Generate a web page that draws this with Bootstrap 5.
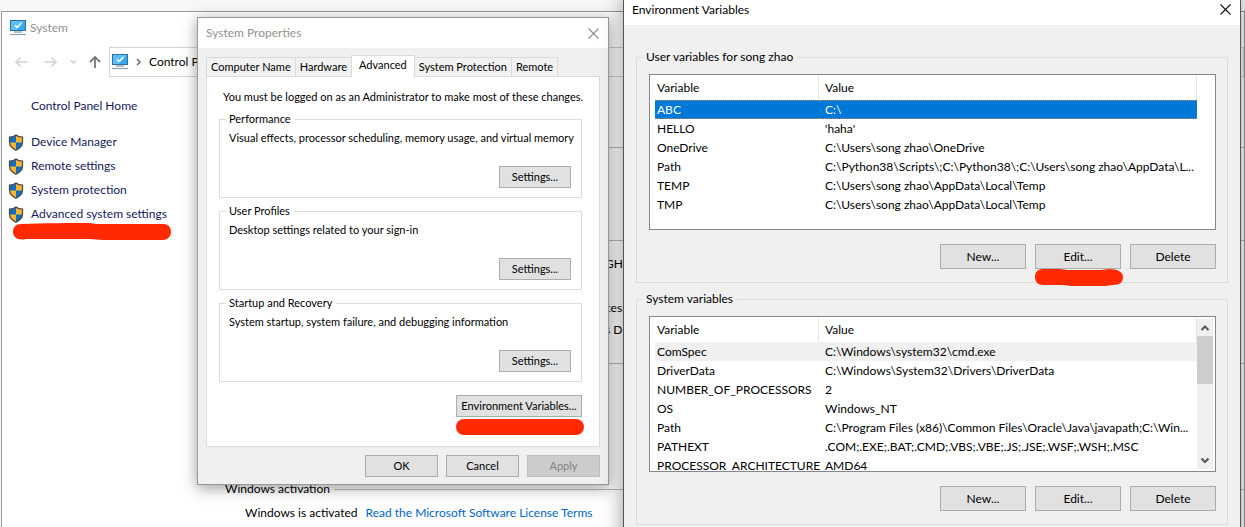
<!DOCTYPE html>
<html lang="en">
<head>
<meta charset="utf-8">
<meta name="viewport" content="width=device-width, initial-scale=1">
<title>System</title>
<link href="https://cdn.jsdelivr.net/npm/bootstrap@5.3.0/dist/css/bootstrap.min.css" rel="stylesheet">
<style>
  body { font-family: Lato, "Open Sans", sans-serif; font-size: 12px; line-height: 16px; color: #000; background: #f7f7f7; }
  .desktop { height: 100vh; min-height: 500px; }
  .window { border: 1px solid #999; }
  .win-system { inset: 11px 0 -20px 1px; background: #fff; }
  .win-props { left: 197px; top: 17px; width: 412px; background: #f0f0f0; box-shadow: 0 3px 14px rgba(0,0,0,.4); font-size: 11px; }
  .win-env { left: 623px; right: 4px; top: -6px; bottom: -20px; min-width: 560px; background: #f0f0f0; border-color: #555; box-shadow: 0 4px 20px rgba(0,0,0,.4); }
  .title-text { font-size: 12px; color: #919191; }
  .title-bar { height: 30px; }
  .close-btn { border: 0; background: none; padding: 0; width: 13px; height: 13px; line-height: 0; color: #8a8a8a; }
  .close-btn.dark { color: #111; }
  svg { display: block; }

  .nav-btn { border: 0; background: none; padding: 0; line-height: 0; }
  .nav-row { height: 30px; margin-top: 11px; }
  .nav-arrows { gap: 12px; }
  .address { height: 30px; border: 1px solid #d4d4d4; padding-left: 2px; }
  .side { width: 223px; padding: 17px 6px 0; }
  .side a { color: #15195e; text-decoration: none; height: 24px; gap: 7px; }
  .side .home { margin-bottom: 12px; padding-left: 23px; }
  .info { padding-top: 70px; }
  .rule { border-top: 1px solid #bbb; }
  .part-a { height: 93px; }
  .part-b { height: 123px; padding: 12px 0 0 380px; line-height: 22px; }
  .part-c { height: 118px; }
  .license { color: #0066cc; text-decoration: none; }

  .tab-btn { border: 1px solid #dadada; border-left-width: 0; border-bottom: 0; background: #f2f2f2; border-radius: 0; padding: 0 4px; height: 19px; line-height: 18px; color: #000; font: inherit; white-space: nowrap; }
  .tab-btn:first-child { border-left-width: 1px; }
  .tab-btn.active { background: #fff; height: 22px; padding: 0 7px 3px; margin: 0 0 -1px -1px; border-left-width: 1px; z-index: 1; }
  .props-body { padding: 7px 8px; }
  .tab-pane-box { border: 1px solid #dcdcdc; background: #fff; padding: 12px 17px 0 12px; height: 371px; }
  .intro { margin-bottom: 6px; }

  fieldset.group { border: 1px solid #dcdcdc; }
  fieldset.group > legend { float: none; width: auto; font-size: inherit; line-height: 16px; margin: 0; padding: 0 4px 0 3px; color: #000; }
  .props-group { height: 87px; margin-bottom: 5px; padding: 3px 10px 9px 9px; }
  .props-group > legend { margin-left: -3px !important; }

  .win-btn { background: #e1e1e1; border: 1px solid #adadad; border-radius: 0; padding: 0; color: #000; font: inherit; white-space: nowrap; }
  .win-btn:disabled { background: #ccc; border-color: #bfbfbf; color: #838383; opacity: 1; }
  .btn-s { width: 72px; height: 22px; }
  .btn-m { width: 73px; height: 22px; }
  .btn-l { width: 86px; height: 25px; }
  .btn-env { width: 126px; height: 22px; }

  .env-body { padding: 22px 12px 0; }
  .env-group { padding: 9px 11px 13px 12px; margin-bottom: 8px; }
  .env-group > legend { margin-left: -6px !important; }
  .env-buttons { gap: 9px; }
  .list-box { border: 1px solid #828790; background: #fff; height: 156px; padding: 1px 2px 0 5px; margin-bottom: 14px; }
  .list-body { min-width: 0; }
  .vars { table-layout: fixed; width: 100%; border-collapse: separate; border-spacing: 0; }
  .vars th { font-weight: 400; height: 24px; padding: 0 0 0 2px; vertical-align: middle; border-right: 1px solid #e5e5e5; }
  .vars td { height: 19px; padding: 0 0 0 2px; line-height: 19px; white-space: nowrap; }
  .vars td + td, .vars th + th { padding-left: 6px; }
  .vars .col-name { width: 164px; }
  .vars .picked td { background: #0078d7; color: #fff; border: 1px dotted #b98a5c; border-width: 1px 0; line-height: 17px; }
  .vars .soft td { background: #f0f0f0; }
  .scroll { width: 16px; margin-top: 1px; margin-bottom: 2px; }
  .scroll.on { background: #f0f0f0; }
  .thumb { height: 48px; background: #cdcdcd; }
  .stroke { left: -1px; top: 100%; }
  .stroke-side { left: 4px; top: 21px; }
</style>
</head>
<body>
<svg width="0" height="0" class="position-absolute" aria-hidden="true">
  <defs>
    <symbol id="pc" viewBox="0 0 16 16">
      <rect x=".5" y=".5" width="15" height="10" fill="#35a8f0" stroke="#2b6f9e"/>
      <path d="M1 1h14L7 10H1z" fill="#5cc0f8"/>
      <path d="M5 5.500l2 2 4.500-4.500" fill="none" stroke="#fff" stroke-width="1.500"/>
      <path d="M4 12h8" stroke="#6b8496"/><path d="M0 14.500h16" stroke="#8aa0b4" stroke-width="1.200"/>
    </symbol>
    <symbol id="shield" viewBox="0 0 15 17">
      <path d="M7.500 1C6 2.500 3.500 3.200 1 3.200V8c0 4 3 6.500 6.500 8.200C11 14.500 14 12 14 8V3.200C11.500 3.200 9 2.500 7.500 1z" fill="#fbb62b"/>
      <path d="M7.500 1C6 2.500 3.500 3.200 1 3.200V8.500h6.500zM7.500 8.500H14c-.4 3.700-3.200 6.100-6.500 7.700z" fill="#0f6fc4"/>
      <path d="M7.500 1C6 2.500 3.500 3.200 1 3.200V8c0 4 3 6.500 6.500 8.200C11 14.500 14 12 14 8V3.200C11.500 3.200 9 2.500 7.500 1z" fill="none" stroke="#4c4c48" stroke-width="1.300"/>
    </symbol>
    <symbol id="cross" viewBox="0 0 13 13"><path d="M1.500 1.500l10 10M11.500 1.500l-10 10" stroke="currentColor" stroke-width="1.100"/></symbol>
  </defs>
</svg>

<main class="desktop position-relative overflow-hidden">

  <section class="window win-system position-absolute d-flex flex-column overflow-hidden" aria-label="System">
    <header class="d-flex align-items-center px-2 pt-2 gap-1">
      <svg width="16" height="16"><use href="#pc"/></svg>
      <span class="title-text">System</span>
    </header>
    <nav class="nav-row d-flex align-items-center flex-shrink-0 ps-2">
      <div class="nav-arrows d-flex align-items-center ps-1 pe-2">
        <button class="nav-btn me-1" aria-label="Back"><svg width="14" height="12" fill="none" stroke="#d0d0d0" stroke-width="1.500"><path d="M13 6H2M6.500 1.500L2 6l4.500 4.500"/></svg></button>
        <button class="nav-btn" aria-label="Forward"><svg width="14" height="12" fill="none" stroke="#d0d0d0" stroke-width="1.500"><path d="M1 6h11M7.500 1.500L12 6l-4.500 4.500"/></svg></button>
        <button class="nav-btn" aria-label="Recent"><svg width="7" height="6" fill="none" stroke="#d0d0d0" stroke-width="1.500"><path d="M1 1.500l2.500 2.500L6 1.500"/></svg></button>
        <button class="nav-btn" aria-label="Up"><svg width="12" height="14" fill="none" stroke="#777" stroke-width="1.800"><path d="M6 13V2M1 7l5-5 5 5"/></svg></button>
      </div>
      <div class="address d-flex align-items-center flex-grow-1">
        <svg width="16" height="16"><use href="#pc"/></svg>
        <svg class="mx-2" width="5" height="8" fill="none" stroke="#666" stroke-width="1.500"><path d="M1 1l3 3-3 3"/></svg>
        <span class="text-nowrap">Control Panel</span>
      </div>
    </nav>
    <div class="d-flex flex-grow-1">
      <nav class="side flex-shrink-0">
        <a class="home d-flex align-items-center" href="#">Control Panel Home</a>
        <a class="d-flex align-items-center" href="#"><svg width="16" height="17"><use href="#shield"/></svg>Device Manager</a>
        <a class="d-flex align-items-center" href="#"><svg width="16" height="17"><use href="#shield"/></svg>Remote settings</a>
        <a class="d-flex align-items-center" href="#"><svg width="16" height="17"><use href="#shield"/></svg>System protection</a>
        <div class="position-relative">
          <a class="d-flex align-items-center" href="#"><svg width="16" height="17"><use href="#shield"/></svg>Advanced system settings</a>
          <svg class="stroke-side position-absolute" width="162" height="18" fill="#ff2a00"><path d="M9 1C30 0 60 0 78 0c3 1 8 1 12 1h61c6 0 8 4 8 8s-3 8-8 8H92c-6 0-10-1-14-1H14c-8 2-13-2-13-7s3-8 8-8z"/></svg>
        </div>
      </nav>
      <div class="info flex-grow-1">
        <div class="rule part-a"></div>
        <div class="rule part-b"><div>GHz</div><br><div>cess</div><div>s D</div></div>
        <div class="rule part-c"></div>
        <div class="d-flex align-items-center gap-1 text-nowrap"><span>Windows activation</span><span class="rule flex-grow-1"></span></div>
        <div class="d-flex text-nowrap mt-2 ps-3 ms-1"><span>Windows is activated</span><a class="license ms-2" href="#">Read the Microsoft Software License Terms</a></div>
      </div>
    </div>
  </section>

  <section class="window win-props position-absolute" role="dialog" aria-label="System Properties">
    <header class="title-bar d-flex align-items-center justify-content-between bg-white px-2">
      <span class="title-text">System Properties</span>
      <button class="close-btn" aria-label="Close"><svg width="13" height="13"><use href="#cross"/></svg></button>
    </header>
    <div class="props-body">
      <div class="d-flex align-items-end" role="tablist">
        <button class="tab-btn" role="tab">Computer Name</button>
        <button class="tab-btn" role="tab">Hardware</button>
        <button class="tab-btn active position-relative" role="tab">Advanced</button>
        <button class="tab-btn" role="tab">System Protection</button>
        <button class="tab-btn" role="tab">Remote</button>
      </div>
      <div class="tab-pane-box">
        <p class="intro ps-1 text-nowrap">You must be logged on as an Administrator to make most of these changes.</p>
        <fieldset class="group props-group d-flex flex-column justify-content-between">
          <legend>Performance</legend>
          <span class="text-nowrap">Visual effects, processor scheduling, memory usage, and virtual memory</span>
          <button class="win-btn btn-s align-self-end">Settings...</button>
        </fieldset>
        <fieldset class="group props-group d-flex flex-column justify-content-between">
          <legend>User Profiles</legend>
          <span>Desktop settings related to your sign-in</span>
          <button class="win-btn btn-s align-self-end">Settings...</button>
        </fieldset>
        <fieldset class="group props-group d-flex flex-column justify-content-between">
          <legend>Startup and Recovery</legend>
          <span>System startup, system failure, and debugging information</span>
          <button class="win-btn btn-s align-self-end">Settings...</button>
        </fieldset>
        <div class="d-flex justify-content-end pt-2">
          <div class="position-relative">
            <button class="win-btn btn-env d-block">Environment Variables...</button>
            <svg class="stroke position-absolute" width="130" height="19" fill="#ff2a00"><rect x="1" y="2" width="128" height="16" rx="8"/></svg>
          </div>
        </div>
      </div>
      <div class="d-flex justify-content-end gap-2 pt-2">
        <button class="win-btn btn-m">OK</button>
        <button class="win-btn btn-m">Cancel</button>
        <button class="win-btn btn-m" disabled>Apply</button>
      </div>
    </div>
  </section>

  <section class="window win-env position-absolute" role="dialog" aria-label="Environment Variables">
    <header class="title-bar d-flex align-items-center justify-content-between bg-white px-2 border-bottom border-white">
      <span>Environment Variables</span>
      <button class="close-btn dark" aria-label="Close"><svg width="13" height="13"><use href="#cross"/></svg></button>
    </header>
    <div class="env-body pt-4">
      <fieldset class="group env-group">
        <legend>User variables for song zhao</legend>
        <div class="list-box d-flex overflow-hidden">
          <div class="list-body flex-grow-1">
            <table class="vars">
              <colgroup><col class="col-name"><col></colgroup>
              <thead><tr><th>Variable</th><th>Value</th></tr></thead>
              <tbody>
                <tr class="picked"><td>ABC</td><td>C:\</td></tr>
                <tr><td>HELLO</td><td>'haha'</td></tr>
                <tr><td>OneDrive</td><td>C:\Users\song zhao\OneDrive</td></tr>
                <tr><td>Path</td><td>C:\Python38\Scripts\;C:\Python38\;C:\Users\song zhao\AppData\L...</td></tr>
                <tr><td>TEMP</td><td>C:\Users\song zhao\AppData\Local\Temp</td></tr>
                <tr><td>TMP</td><td>C:\Users\song zhao\AppData\Local\Temp</td></tr>
              </tbody>
            </table>
          </div>
          <div class="scroll flex-shrink-0"></div>
        </div>
        <div class="env-buttons d-flex justify-content-end">
          <button class="win-btn btn-l">New...</button>
          <div class="position-relative">
            <button class="win-btn btn-l d-block">Edit...</button>
            <svg class="stroke position-absolute" width="90" height="18" fill="#ff2a00"><path d="M9 0h16c4 0 6 1 8 1h34c2 0 5-1 8-1 9 0 14 3 14 8s-3 8-10 8c-3 0-5 1-8 1H38c-4 0-6-1-9-1H9c-5 0-8-3-8-8s3-8 8-8z"/></svg>
          </div>
          <button class="win-btn btn-l">Delete</button>
        </div>
      </fieldset>
      <fieldset class="group env-group">
        <legend>System variables</legend>
        <div class="list-box d-flex overflow-hidden">
          <div class="list-body flex-grow-1">
            <table class="vars">
              <colgroup><col class="col-name"><col></colgroup>
              <thead><tr><th>Variable</th><th>Value</th></tr></thead>
              <tbody>
                <tr class="soft"><td>ComSpec</td><td>C:\Windows\system32\cmd.exe</td></tr>
                <tr><td>DriverData</td><td>C:\Windows\System32\Drivers\DriverData</td></tr>
                <tr><td>NUMBER_OF_PROCESSORS</td><td>2</td></tr>
                <tr><td>OS</td><td>Windows_NT</td></tr>
                <tr><td>Path</td><td>C:\Program Files (x86)\Common Files\Oracle\Java\javapath;C:\Win...</td></tr>
                <tr><td>PATHEXT</td><td>.COM;.EXE;.BAT;.CMD;.VBS;.VBE;.JS;.JSE;.WSF;.WSH;.MSC</td></tr>
                <tr><td>PROCESSOR_ARCHITECTURE</td><td>AMD64</td></tr>
              </tbody>
            </table>
          </div>
          <div class="scroll on d-flex flex-column flex-shrink-0">
            <svg width="16" height="17" fill="none" stroke="#555" stroke-width="2"><path d="M4.500 11L8 7.500 11.500 11"/></svg>
            <div class="thumb"></div>
            <svg class="mt-auto" width="16" height="17" fill="none" stroke="#555" stroke-width="2"><path d="M4.500 6.500L8 10l3.500-3.500"/></svg>
          </div>
        </div>
        <div class="env-buttons d-flex justify-content-end">
          <button class="win-btn btn-l">New...</button>
          <button class="win-btn btn-l">Edit...</button>
          <button class="win-btn btn-l">Delete</button>
        </div>
      </fieldset>
    </div>
  </section>
</main>
<script src="https://cdn.jsdelivr.net/npm/bootstrap@5.3.0/dist/js/bootstrap.bundle.min.js"></script>
</body>
</html>
